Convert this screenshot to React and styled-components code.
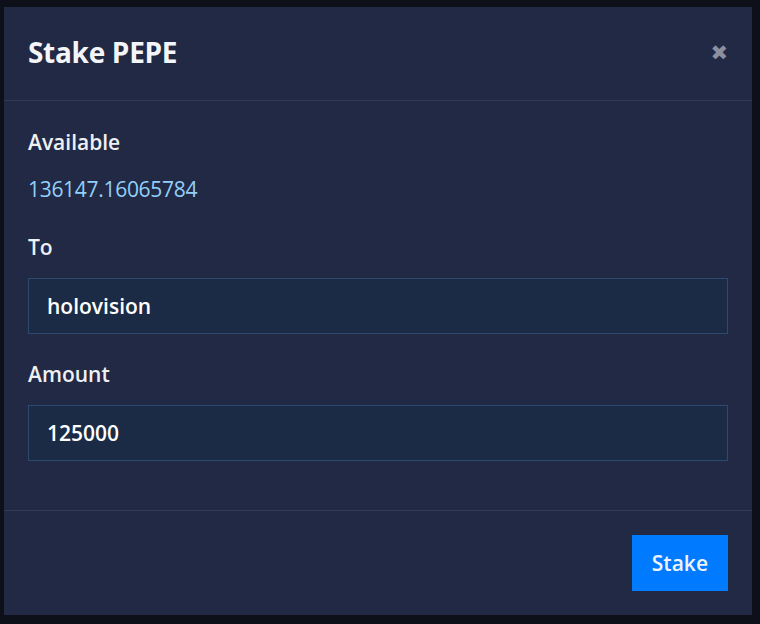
import React from 'react';
import styled, { createGlobalStyle } from 'styled-components';

const GlobalStyle = createGlobalStyle`
  html, body {
    margin: 0;
    padding: 0;
    background: #0d1019;
  }

  body {
    font-family: 'Open Sans', 'Noto Sans', sans-serif;
    color: #f2f4f8;
  }

  * {
    box-sizing: border-box;
  }
`;

const Page = styled.div`
  width: 760px;
  height: 624px;
  padding: 7px 8px 9px 4px;
  display: flex;
`;

const ModalBlock = styled.div`
  width: 748px;
  background: #212945;
  display: flex;
  flex-direction: column;
`;

const Header = styled.div`
  display: flex;
  align-items: center;
  justify-content: space-between;
  padding: 23px 24px 26px 24px;
  border-bottom: 1px solid #323d52;
`;

const Title = styled.h2`
  margin: 0;
  font-size: 28px;
  font-weight: 700;
  line-height: 44px;
  letter-spacing: -0.3px;
  color: #f4f5f8;
`;

const CloseButton = styled.button`
  border: none;
  background: none;
  padding: 0;
  margin-top: 3px;
  font-family: 'DejaVu Sans', sans-serif;
  font-size: 21px;
  line-height: 1;
  color: #8b8f9f;
  cursor: pointer;
`;

const Body = styled.div`
  flex: 1;
  padding: 25px 24px 24px 24px;
  border-bottom: 1px solid #323d52;
`;

const Group = styled.div`
  margin-bottom: ${props => (props.$tight ? '24px' : '25px')};
`;

const Label = styled.label`
  display: block;
  margin-bottom: 14px;
  font-size: 21px;
  font-weight: 600;
  line-height: 33px;
  color: #eef0f4;
`;

const Balance = styled.div`
  font-size: 21px;
  font-weight: 500;
  line-height: 33px;
  letter-spacing: -0.3px;
  color: #92d0fa;
`;

const TextInput = styled.input`
  display: block;
  width: 100%;
  height: 56px;
  padding: 0 18px;
  background: #1c2b45;
  border: 1px solid #2b4a6e;
  border-radius: 0;
  outline: none;
  font-family: inherit;
  font-size: 21px;
  font-weight: 600;
  color: #ffffff;
`;

const Footer = styled.div`
  display: flex;
  align-items: flex-start;
  justify-content: flex-end;
  padding: 24px;
`;

const SubmitButton = styled.button`
  height: 56px;
  padding: 0 20px;
  border: none;
  border-radius: 0;
  background: #007bff;
  font-family: inherit;
  font-size: 21px;
  font-weight: 600;
  color: #eef3ff;
  cursor: pointer;
`;

const App = () => {
  return (
    <>
      <GlobalStyle />
      <Page>
        <ModalBlock>
          <Header>
            <Title>Stake PEPE</Title>
            <CloseButton aria-label="Close">✖</CloseButton>
          </Header>
          <Body>
            <Group>
              <Label>Available</Label>
              <Balance>136147.16065784</Balance>
            </Group>
            <Group $tight>
              <Label htmlFor="to">To</Label>
              <TextInput id="to" defaultValue="holovision" />
            </Group>
            <Group>
              <Label htmlFor="amount">Amount</Label>
              <TextInput id="amount" defaultValue="125000" />
            </Group>
          </Body>
          <Footer>
            <SubmitButton>Stake</SubmitButton>
          </Footer>
        </ModalBlock>
      </Page>
    </>
  );
};

export default App;
